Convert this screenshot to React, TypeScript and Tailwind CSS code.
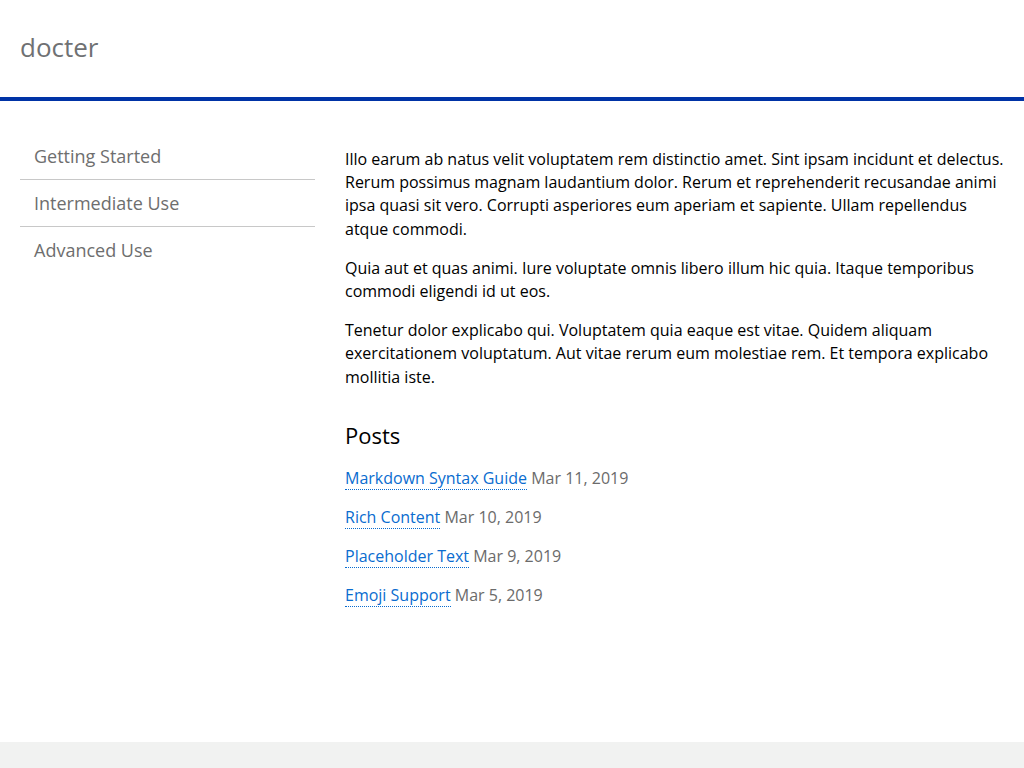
import * as React from "react";

const navItems = ["Getting Started", "Intermediate Use", "Advanced Use"];

const posts = [
   { title: "Markdown Syntax Guide", date: "Mar 11, 2019" },
   { title: "Rich Content", date: "Mar 10, 2019" },
   { title: "Placeholder Text", date: "Mar 9, 2019" },
   { title: "Emoji Support", date: "Mar 5, 2019" },
];

export default function App() {
   return (
      <div className="bg-white text-black" style={{ fontFamily: '"Open Sans", sans-serif' }}>
         <header className="flex h-[101px] items-center border-b-4 border-[#0033a6] px-5 pb-[4px]">
            <span className="text-[26px] leading-none text-[#6f7173]">docter</span>
         </header>

         <main className="grid min-h-[641px] grid-cols-[295px_1fr] gap-[30px] px-5 pt-8">
            <nav>
               <ul>
                  {navItems.map((item, i) => (
                     <li
                        key={item}
                        className={`px-[14px] py-3 text-[18px] leading-[22px] text-[#6e6e6e] ${
                           i < navItems.length - 1 ? "border-b border-[#c8c8c8]" : ""
                        }`}>
                        {item}
                     </li>
                  ))}
               </ul>
            </nav>

            <article className="pt-[15px] text-[16px] leading-[23.2px]">
               <p className="mb-4">
                  Illo earum ab natus velit voluptatem rem distinctio amet. Sint ipsam incidunt et delectus.
                  Rerum possimus magnam laudantium dolor. Rerum et reprehenderit recusandae animi ipsa quasi
                  sit vero. Corrupti asperiores eum aperiam et sapiente. Ullam repellendus atque commodi.
               </p>
               <p className="mb-4">
                  Quia aut et quas animi. Iure voluptate omnis libero illum hic quia. Itaque temporibus commodi
                  eligendi id ut eos.
               </p>
               <p>
                  Tenetur dolor explicabo qui. Voluptatem quia eaque est vitae. Quidem aliquam exercitationem
                  voluptatum. Aut vitae rerum eum molestiae rem. Et tempora explicabo mollitia iste.
               </p>

               <h2 className="mt-[33px] mb-[19px] text-[22px] leading-[26px]">Posts</h2>
               {posts.map((post) => (
                  <p key={post.title} className="mb-4">
                     <a href="#" className="border-b border-dotted border-[#0a6ccf] text-[#0a6ccf]">
                        {post.title}
                     </a>{" "}
                     <span className="text-[#6b6b6b]">{post.date}</span>
                  </p>
               ))}
            </article>
         </main>

         <footer className="h-[60px] bg-[#f1f2f1]" />
      </div>
   );
}
